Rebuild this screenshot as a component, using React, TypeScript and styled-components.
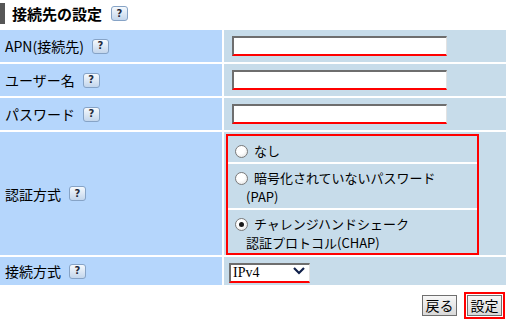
import React from "react";
import styled, { createGlobalStyle } from "styled-components";

const Global = createGlobalStyle`
  html, body { margin: 0; padding: 0; background: #fff; }
  body {
    font-family: "Noto Sans CJK JP", "Noto Sans", sans-serif;
    font-size: 14px;
    color: #000;
  }
`;

const Page = styled.div`
  width: 508px;
  height: 320px;
  overflow: hidden;
`;

const TitleRow = styled.div`
  display: flex;
  align-items: center;
  height: 21px;
  margin-top: 3px;
  margin-bottom: 6px;
  border-left: 5px solid #565656;
  padding-left: 7px;
  gap: 9px;
`;

const TitleText = styled.span`
  font-size: 15px;
  font-weight: bold;
  line-height: 21px;
`;

const Help = styled.span`
  display: inline-flex;
  align-items: center;
  justify-content: center;
  box-sizing: border-box;
  width: 17px;
  height: 15px;
  border: 1px solid #86a3c6;
  border-radius: 3px;
  background: linear-gradient(#f5f9fd, #c3d6ec);
  font-family: "DejaVu Sans", sans-serif;
  font-size: 10px;
  font-weight: bold;
  color: #1f2a3a;
  line-height: 1;
`;

const Grid = styled.div`
  display: grid;
  grid-template-columns: 222px 282px;
  grid-template-rows: 32px 32px 32px 123px 28px;
  gap: 2px;
`;

const Label = styled.div`
  background: #b5d6fc;
  display: flex;
  align-items: center;
  padding-left: 5px;
  gap: 8px;
  font-size: 14px;
`;

const Value = styled.div<{ $pad?: number; $top?: boolean }>`
  background: #c7dcea;
  display: flex;
  align-items: ${(p) => (p.$top ? "flex-start" : "center")};
  padding-left: ${(p) => p.$pad ?? 8}px;
  padding-top: ${(p) => (p.$top ? 2 : 0)}px;
`;

const TextInput = styled.input`
  box-sizing: border-box;
  width: 215px;
  height: 20px;
  margin: 0;
  padding: 0 3px;
  background: #fff;
  border-top: 2px solid #6e6e6e;
  border-left: 2px solid #6e6e6e;
  border-right: 1px solid #e2e2e2;
  border-bottom: 2px solid #ff0000;
  outline: none;
`;

const AuthBox = styled.div`
  box-sizing: border-box;
  width: 253px;
  height: 121px;
  border: 2px solid #ff0000;
  background: #fff;
  display: flex;
  flex-direction: column;
  gap: 2px;
`;

const Option = styled.label<{ $h: number }>`
  box-sizing: border-box;
  height: ${(p) => p.$h}px;
  background: #c7dcea;
  display: flex;
  align-items: center;
  padding-left: 18px;
  padding-top: 2px;
`;

const OptionText = styled.span`
  display: block;
  text-indent: -11px;
  line-height: 19px;
  font-size: 13px;
`;

const Radio = styled.input`
  appearance: none;
  box-sizing: border-box;
  width: 13px;
  height: 13px;
  margin: 0 6px 0 0;
  border: 1px solid #7a7a7a;
  border-radius: 50%;
  background: radial-gradient(circle at 40% 35%, #ffffff 40%, #dcdcdc 100%);
  vertical-align: -2px;
  position: relative;
  &:checked::after {
    content: "";
    position: absolute;
    left: 3px;
    top: 3px;
    width: 5px;
    height: 5px;
    border-radius: 50%;
    background: #1a1a1a;
  }
`;

const SelectWrap = styled.div`
  position: relative;
  width: 81px;
  height: 20px;
`;

const Select = styled.select`
  appearance: none;
  box-sizing: border-box;
  width: 81px;
  height: 20px;
  margin: 0;
  padding: 0 0 0 2px;
  background: #fff;
  border-top: 2px solid #6e6e6e;
  border-left: 2px solid #6e6e6e;
  border-right: 1px solid #e2e2e2;
  border-bottom: 2px solid #ff0000;
  border-radius: 0;
  font-family: "Liberation Serif", serif;
  font-size: 14px;
  color: #000;
  outline: none;
`;

const Chevron = styled.svg`
  position: absolute;
  right: 5px;
  top: 5px;
  pointer-events: none;
`;

const Buttons = styled.div`
  display: flex;
  justify-content: flex-end;
  align-items: center;
  gap: 7px;
  margin-top: 7px;
  padding-right: 3px;
  height: 27px;
`;

const Btn = styled.button`
  box-sizing: border-box;
  width: 35px;
  height: 21px;
  margin: 0;
  padding: 0;
  border: 1px solid #6f6f6f;
  background: linear-gradient(#f7f7f7, #d9d9d9);
  font-family: "Noto Sans CJK JP", sans-serif;
  font-size: 14px;
  color: #000;
  line-height: 19px;
`;

const Focus = styled.div`
  border: 2px solid #ff0000;
  padding: 1px;
  display: flex;
`;

export default function App() {
  return (
    <Page>
      <Global />
      <TitleRow>
        <TitleText>接続先の設定</TitleText>
        <Help>?</Help>
      </TitleRow>
      <Grid>
        <Label>
          APN(接続先)<Help>?</Help>
        </Label>
        <Value>
          <TextInput type="text" />
        </Value>
        <Label>
          ユーザー名<Help>?</Help>
        </Label>
        <Value>
          <TextInput type="text" />
        </Value>
        <Label>
          パスワード<Help>?</Help>
        </Label>
        <Value>
          <TextInput type="password" />
        </Value>
        <Label>
          認証方式<Help>?</Help>
        </Label>
        <Value $pad={2} $top>
          <AuthBox>
            <Option $h={26}>
              <OptionText>
                <Radio type="radio" name="auth" />
                なし
              </OptionText>
            </Option>
            <Option $h={44}>
              <OptionText>
                <Radio type="radio" name="auth" />
                暗号化されていないパスワード
                <br />
                (PAP)
              </OptionText>
            </Option>
            <Option $h={43}>
              <OptionText>
                <Radio type="radio" name="auth" defaultChecked />
                チャレンジハンドシェーク
                <br />
                認証プロトコル(CHAP)
              </OptionText>
            </Option>
          </AuthBox>
        </Value>
        <Label>
          接続方式<Help>?</Help>
        </Label>
        <Value $pad={5}>
          <SelectWrap>
            <Select defaultValue="ipv4">
              <option value="ipv4">IPv4</option>
              <option value="ipv6">IPv6</option>
            </Select>
            <Chevron width="12" height="9" viewBox="0 0 12 9">
              <path d="M1 2 L6 7 L11 2" fill="none" stroke="#10204a" strokeWidth="2.2" />
            </Chevron>
          </SelectWrap>
        </Value>
      </Grid>
      <Buttons>
        <Btn>戻る</Btn>
        <Focus>
          <Btn>設定</Btn>
        </Focus>
      </Buttons>
    </Page>
  );
}
